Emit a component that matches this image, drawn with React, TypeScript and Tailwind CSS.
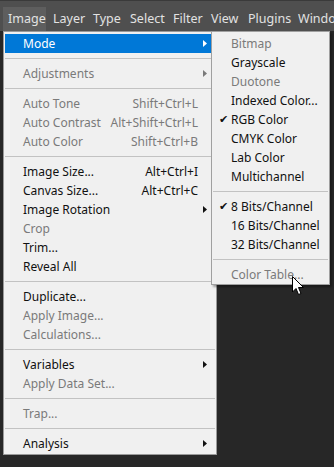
import React from "react";

type Item = {
  label?: string;
  shortcut?: string;
  disabled?: boolean;
  sub?: boolean;
  active?: boolean;
  check?: boolean;
  sep?: boolean;
};

const mainItems: Item[] = [
  { label: "Mode", sub: true, active: true },
  { sep: true },
  { label: "Adjustments", sub: true, disabled: true },
  { sep: true },
  { label: "Auto Tone", shortcut: "Shift+Ctrl+L", disabled: true },
  { label: "Auto Contrast", shortcut: "Alt+Shift+Ctrl+L", disabled: true },
  { label: "Auto Color", shortcut: "Shift+Ctrl+B", disabled: true },
  { sep: true },
  { label: "Image Size...", shortcut: "Alt+Ctrl+I" },
  { label: "Canvas Size...", shortcut: "Alt+Ctrl+C" },
  { label: "Image Rotation", sub: true },
  { label: "Crop", disabled: true },
  { label: "Trim..." },
  { label: "Reveal All" },
  { sep: true },
  { label: "Duplicate..." },
  { label: "Apply Image...", disabled: true },
  { label: "Calculations...", disabled: true },
  { sep: true },
  { label: "Variables", sub: true },
  { label: "Apply Data Set...", disabled: true },
  { sep: true },
  { label: "Trap...", disabled: true },
  { sep: true },
  { label: "Analysis", sub: true },
];

const modeItems: Item[] = [
  { label: "Bitmap", disabled: true },
  { label: "Grayscale" },
  { label: "Duotone", disabled: true },
  { label: "Indexed Color..." },
  { label: "RGB Color", check: true },
  { label: "CMYK Color" },
  { label: "Lab Color" },
  { label: "Multichannel" },
  { sep: true },
  { label: "8 Bits/Channel", check: true },
  { label: "16 Bits/Channel" },
  { label: "32 Bits/Channel" },
  { sep: true },
  { label: "Color Table...", disabled: true },
];

const bar = [
  { label: "Image", w: "w-[43px] pl-[5px] bg-[#5e5e5e]" },
  { label: "Layer", w: "w-[42px] pl-[7px]" },
  { label: "Type", w: "w-[37px] pl-[5px]" },
  { label: "Select", w: "w-[43px] pl-[5px]" },
  { label: "Filter", w: "w-[38px] pl-[5px]" },
  { label: "View", w: "w-[37px] pl-[5px]" },
  { label: "Plugins", w: "w-[50px] pl-[5px]" },
  { label: "Window", w: "pl-[5px]" },
];

const Arrow = ({ color }: { color: string }) => (
  <svg width="4" height="7" viewBox="0 0 4 7" className="absolute right-[8px] top-[6px]">
    <path d="M0 0 L4 3.5 L0 7 Z" fill={color} />
  </svg>
);

const Row = ({ item }: { item: Item }) => {
  if (item.sep) {
    return (
      <div className="h-[11px] flex items-center">
        <div className="h-px w-full mx-[1px] bg-[#c2c2c2]" />
      </div>
    );
  }
  const color = item.active ? "text-white" : item.disabled ? "text-[#7a7a7a]" : "text-[#111]";
  const arrowColor = item.active ? "#fff" : item.disabled ? "#7a7a7a" : "#111";
  return (
    <div
      className={`relative h-[19px] flex items-center mx-[1px] pl-[18px] ${color} ${
        item.active ? "bg-[#0078d7]" : ""
      }`}
    >
      {item.check && <span className="absolute left-[6px] top-[1px] text-[11px] text-[#111]">✔</span>}
      <span className="flex-1 whitespace-nowrap">{item.label}</span>
      {item.shortcut && <span className="pr-[17px] whitespace-nowrap">{item.shortcut}</span>}
      {item.sub && <Arrow color={arrowColor} />}
    </div>
  );
};

export default function App() {
  return (
    <div
      className="relative w-[334px] h-[467px] overflow-hidden bg-[#272727] text-[12px]"
      style={{ fontFamily: '"Noto Sans", "Open Sans", sans-serif' }}
    >
      <div className="h-[31px] bg-[#4f4f4f] border-t border-[#3a3a3a] flex items-end overflow-hidden text-[#e2e2e2] text-[12.5px]">
        <div className="w-[3px] shrink-0" />
        {bar.map((b) => (
          <div key={b.label} className={`h-[24px] shrink-0 flex items-center whitespace-nowrap ${b.w}`}>
            {b.label}
          </div>
        ))}
      </div>

      <div className="ml-[3px] w-[214px] bg-[#f0f0f0] border border-[#9a9a9a] pt-[2px] pb-[1px]">
        {mainItems.map((it, i) => (
          <Row key={i} item={it} />
        ))}
      </div>

      <div className="absolute left-[211px] top-[31px] w-[119px] bg-[#f0f0f0] border border-[#a0a0a0] pt-[2px] shadow-[2px_2px_2px_rgba(0,0,0,0.35)]">
        {modeItems.map((it, i) => (
          <Row key={i} item={it} />
        ))}
      </div>

      <svg
        className="absolute left-[292px] top-[276px]"
        width="13"
        height="20"
        viewBox="0 0 13 20"
      >
        <path
          d="M0.5 0.5 L0.5 16 L4 12.5 L6.5 18.5 L9 17.5 L6.5 11.5 L11.5 11.5 Z"
          fill="#fff"
          stroke="#000"
          strokeWidth="1"
          strokeLinejoin="round"
        />
      </svg>
    </div>
  );
}
